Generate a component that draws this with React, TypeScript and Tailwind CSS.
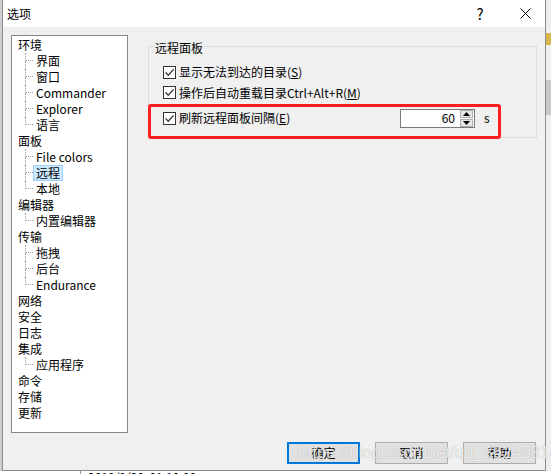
import React from "react";

type Node = { label: string; children?: string[] };

const tree: Node[] = [
  { label: "环境", children: ["界面", "窗口", "Commander", "Explorer", "语言"] },
  { label: "面板", children: ["File colors", "远程", "本地"] },
  { label: "编辑器", children: ["内置编辑器"] },
  { label: "传输", children: ["拖拽", "后台", "Endurance"] },
  { label: "网络" },
  { label: "安全" },
  { label: "日志" },
  { label: "集成", children: ["应用程序"] },
  { label: "命令" },
  { label: "存储" },
  { label: "更新" },
];

const Check = () => (
  <span className="flex h-[13px] w-[13px] shrink-0 items-center justify-center border border-[#333333] bg-white">
    <svg width="11" height="11" viewBox="0 0 11 11">
      <path d="M1.6 5.4 L4.2 8.2 L9.6 2.4" fill="none" stroke="#333333" strokeWidth="1.3" />
    </svg>
  </span>
);

const Arrow = ({ up }: { up?: boolean }) => (
  <span className="flex h-[8px] w-[13px] items-center justify-center border border-[#adadad] bg-[#e6e6e6]">
    <svg width="7" height="4" viewBox="0 0 7 4">
      <path d={up ? "M0 4 L3.5 0 L7 4Z" : "M0 0 L3.5 4 L7 0Z"} fill="#000" />
    </svg>
  </span>
);

const TreeLabel = ({ text, selected }: { text: string; selected?: boolean }) => (
  <span
    className={
      selected
        ? "h-[16px] border border-[#99d1ff] bg-[#cce8ff] px-[2px] leading-[14px]"
        : "h-[16px] border border-transparent px-[2px] leading-[14px]"
    }
  >
    {text}
  </span>
);

const Sidebar = () => (
  <div className="h-[398px] w-[117px] shrink-0 border border-[#828790] bg-white pt-[1px] text-[12px] text-black">
    {tree.map((n) => (
      <div key={n.label}>
        <div className="flex h-[16px] pl-[3px]">
          <TreeLabel text={n.label} />
        </div>
        {n.children?.map((c, i) => {
          const last = i === n.children!.length - 1;
          return (
            <div key={c} className="flex h-[16px] pl-[13px]">
              <div className="flex w-[8px] flex-col">
                <div className="h-[8px] border-b border-l border-dotted border-[#a0a0a0]" />
                <div className={last ? "h-[8px]" : "h-[8px] border-l border-dotted border-[#a0a0a0]"} />
              </div>
              <TreeLabel text={c} selected={c === "远程"} />
            </div>
          );
        })}
      </div>
    ))}
  </div>
);

export default function App() {
  return (
    <div className="flex h-[474px] w-[551px] flex-col overflow-hidden bg-[#f2f2f2] font-['Noto_Sans_CJK_SC',sans-serif] text-[12px] text-black">
      <div className="flex h-[471px]">
        <div className="w-[2px] bg-[#cfcfcf]" />
        <div className="relative flex w-[544px] flex-col border-x border-b border-[#8c8c8c] bg-[#f0f0f0]">
          {/* title bar */}
          <div className="flex h-[27px] shrink-0 items-center bg-white pl-[4px]">
            <span className="leading-[16px]">选项</span>
            <span className="ml-auto w-[30px] text-center text-[15px] leading-none">?</span>
            <span className="ml-[15px] mr-[5px] flex w-[30px] justify-center">
              <svg width="11" height="11" viewBox="0 0 11 11">
                <path d="M0.5 0.5 L10.5 10.5 M10.5 0.5 L0.5 10.5" stroke="#000" strokeWidth="1" />
              </svg>
            </span>
          </div>

          <div className="flex flex-1 pb-[6px] pl-[8px] pt-[8px]">
            <Sidebar />

            <div className="ml-[20px] mr-[8px] flex flex-1 flex-col">
              <fieldset className="mt-[1px] border border-[#dcdcdc] pb-[4px] pt-[6px]">
                <legend className="ml-[5px] px-[1px] pt-[4px] leading-[16px]">远程面板</legend>

                <div className="flex h-[20px] items-center gap-[3px] pl-[14px]">
                  <Check />
                  <span className="leading-[16px]">
                    显示无法到达的目录(<u>S</u>)
                  </span>
                </div>
                <div className="flex h-[21px] items-center gap-[3px] pl-[14px]">
                  <Check />
                  <span className="leading-[16px]">
                    操作后自动重载目录Ctrl+Alt+R(<u>M</u>)
                  </span>
                </div>
                <div className="relative flex h-[30px] items-center gap-[3px] pl-[14px]">
                  <Check />
                  <span className="leading-[16px]">
                    刷新远程面板间隔(<u>E</u>)
                  </span>
                  <div className="ml-auto flex h-[19px] w-[75px] items-center border border-[#7a7a7a] bg-white">
                    <span className="flex-1 pr-[5px] text-right leading-[16px]">60</span>
                    <div className="mr-[1px] flex flex-col gap-[1px]">
                      <Arrow up />
                      <Arrow />
                    </div>
                  </div>
                  <span className="w-[58px] pl-[6px] leading-[16px]">s</span>
                  <div className="pointer-events-none absolute left-[-1px] top-[1px] h-[35px] w-[353px] rounded-[3px] border-[3px] border-[#ff1f1f]" />
                </div>
              </fieldset>

              <div className="mt-auto flex justify-end gap-[15px] pr-[1px]">
                <button className="h-[22px] w-[73px] border-2 border-[#0078d7] bg-[#e1e1e1] leading-[16px]">确定</button>
                <button className="h-[22px] w-[73px] border border-[#adadad] bg-[#e1e1e1] leading-[16px]">取消</button>
                <button className="h-[22px] w-[73px] border border-[#adadad] bg-[#e1e1e1] leading-[16px]">帮助</button>
              </div>
            </div>
          </div>

          <div className="pointer-events-none absolute left-[295px] top-[443px] font-['Liberation_Sans',sans-serif] text-[17px] leading-[20px] text-white/80 [text-shadow:0_0_1px_rgba(0,0,0,0.35)]">
            https://blog.csdn.net/qq_36245814
          </div>
        </div>
        <div className="flex w-[5px] flex-col bg-[#eeeeee]">
          <div className="mt-[33px] h-[12px] bg-[#d9b84a]" />
          <div className="mt-[35px] h-[35px] bg-[#c8c8c8]" />
        </div>
      </div>
      <div className="flex h-[3px] overflow-hidden bg-white">
        <div className="ml-[80px] w-[1px] bg-[#9a9a9a]" />
        <span className="ml-[7px] text-[12px] leading-[12px]">2019/9/20&nbsp;&nbsp;01:10:00</span>
      </div>
    </div>
  );
}
